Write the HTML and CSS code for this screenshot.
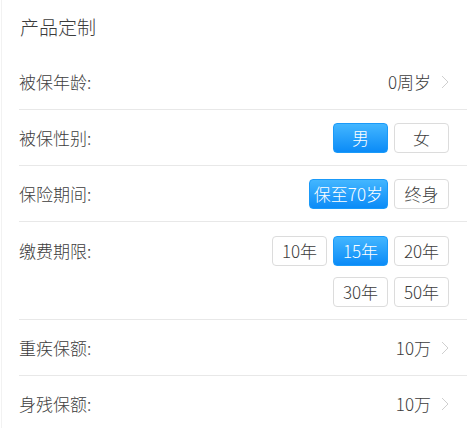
FILE: index.html
```html
<!DOCTYPE html>
<html lang="zh-CN">
  <head>
    <meta charset="UTF-8" />
    <meta name="viewport" content="width=device-width, initial-scale=1.0" />
    <title>产品定制</title>
    <link rel="stylesheet" href="styles.css">
  </head>
  <body>
    <div class="card">
      <h3 class="card-title">产品定制</h3>

      <div class="row first">
        <span class="label">被保年龄:</span>
        <span class="value">0周岁
          <svg class="arrow" width="8" height="14" viewBox="0 0 8 14"><polyline points="1,1 7,7 1,13" /></svg>
        </span>
      </div>

      <div class="row">
        <span class="label">被保性别:</span>
        <div class="options">
          <button class="opt active">男</button>
          <button class="opt">女</button>
        </div>
      </div>

      <div class="row">
        <span class="label">保险期间:</span>
        <div class="options">
          <button class="opt active">保至70岁</button>
          <button class="opt">终身</button>
        </div>
      </div>

      <div class="row">
        <span class="label">缴费期限:</span>
        <div class="options">
          <button class="opt">10年</button>
          <button class="opt active">15年</button>
          <button class="opt">20年</button>
          <button class="opt">30年</button>
          <button class="opt">50年</button>
        </div>
      </div>

      <div class="row">
        <span class="label">重疾保额:</span>
        <span class="value">10万
          <svg class="arrow" width="8" height="14" viewBox="0 0 8 14"><polyline points="1,1 7,7 1,13" /></svg>
        </span>
      </div>

      <div class="row">
        <span class="label">身残保额:</span>
        <span class="value">10万
          <svg class="arrow" width="8" height="14" viewBox="0 0 8 14"><polyline points="1,1 7,7 1,13" /></svg>
        </span>
      </div>
    </div>
  </body>
</html>
```

FILE: styles.css
```css
/* Reset */
body {
  margin: 0;
  background: #fff;
  font-family: "Noto Sans CJK SC", "Noto Sans", sans-serif;
  font-weight: 300;
  color: #3c3c3c;
}

/* Card */
.card {
  margin-left: 1px;
  border-left: 1px solid #f2f2f2;
  height: 428px;
  background: #fff;
}

.card-title {
  margin: 0;
  padding: 13px 0 13px 18px;
  font-size: 19px;
  line-height: 28px;
  font-weight: 300;
  color: #3c3c3c;
}

/* Rows */
.row {
  display: flex;
  align-items: flex-start;
  margin-left: 17px;
  padding: 13px 18px 12px 0;
  border-top: 1px solid #e8e8e8;
}

.row.first {
  border-top: none;
}

.row:nth-child(5) {
  padding-top: 14px;
}

.label {
  flex: 1;
  font-size: 17px;
  line-height: 30px;
}

.value {
  display: flex;
  align-items: center;
  gap: 10px;
  font-size: 17px;
  line-height: 30px;
}

.arrow polyline {
  fill: none;
  stroke: #cfcfcf;
  stroke-width: 1;
}

/* Option buttons */
.options {
  display: flex;
  flex-wrap: wrap;
  justify-content: flex-end;
  gap: 11px 6px;
  max-width: 180px;
}

.opt {
  box-sizing: border-box;
  min-width: 55px;
  height: 30px;
  padding: 0 4px;
  border: 1px solid #dcdcdc;
  border-radius: 4px;
  background: #fff;
  color: #3c3c3c;
  font-family: inherit;
  font-weight: 300;
  font-size: 17px;
  line-height: 28px;
}

.opt.active {
  border-color: #1a9af9;
  background: linear-gradient(#43b6ff, #0b8bf7);
  color: #fff;
}
```
